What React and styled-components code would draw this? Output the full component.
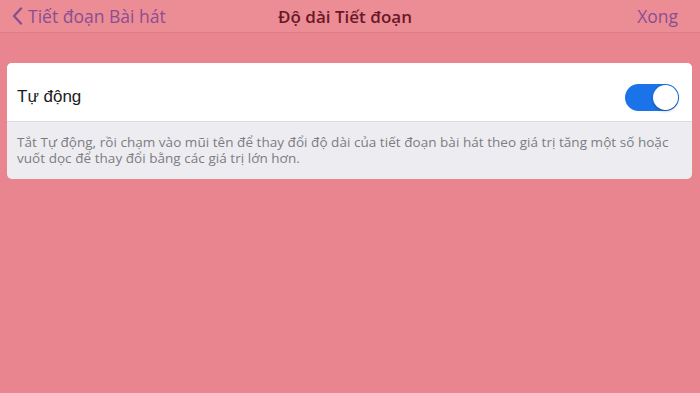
import React from "react";
import styled, { createGlobalStyle } from "styled-components";

const Global = createGlobalStyle`
  html, body { margin: 0; padding: 0; }
  body {
    width: 700px;
    height: 393px;
    overflow: hidden;
    background: #e8858f;
    font-family: "Open Sans", "Liberation Sans", Arial, sans-serif;
  }
`;

const Page = styled.div`
  width: 700px;
  height: 393px;
  display: flex;
  flex-direction: column;
  background: #e8858f;
`;

const NavBar = styled.header`
  height: 32px;
  display: grid;
  grid-template-columns: 1fr auto 1fr;
  align-items: center;
  padding: 0 22px 0 12px;
  background: #ec8d96;
  border-bottom: 1px solid #de7a84;
`;

const Back = styled.div`
  display: flex;
  align-items: center;
  gap: 5px;
  color: #8a4e92;
  font-size: 17.5px;
  justify-self: start;
`;

const Title = styled.div`
  color: #6a1827;
  font-size: 17px;
  font-weight: 600;
`;

const Done = styled.div`
  justify-self: end;
  color: #8a4e92;
  font-size: 17.5px;
  font-weight: 500;
`;

const Content = styled.main`
  padding: 30px 8px 0 7px;
`;

const Card = styled.section`
  border-radius: 5px;
  overflow: hidden;
  background: #ededf1;
`;

const Row = styled.div`
  height: 59px;
  box-sizing: border-box;
  display: flex;
  align-items: center;
  justify-content: space-between;
  padding: 10px 13px 0 10px;
  background: #ffffff;
  border-bottom: 1px solid #dcdce0;
`;

const Label = styled.span`
  font-family: "Liberation Sans", Arial, sans-serif;
  font-size: 17px;
  color: #1c1c1e;
`;

const Toggle = styled.div`
  width: 54px;
  height: 27px;
  border-radius: 14px;
  background: ${p => (p.on ? "#1a73e8" : "#e5e5ea")};
  display: flex;
  align-items: center;
  justify-content: ${p => (p.on ? "flex-end" : "flex-start")};
  padding: 0 1px;
  box-sizing: border-box;
`;

const Knob = styled.div`
  width: 25px;
  height: 25px;
  border-radius: 50%;
  background: #fff;
  box-shadow: 0 1px 3px rgba(0, 0, 0, 0.3);
`;

const Footer = styled.p`
  margin: 0;
  padding: 12px 8px 13px 10px;
  font-size: 13.5px;
  letter-spacing: 0.04px;
  line-height: 16px;
  color: #7c7c82;
`;

export default function App() {
  return (
    <>
      <Global />
      <Page>
        <NavBar>
          <Back>
            <svg width="11" height="18" viewBox="0 0 11 18">
              <path d="M9 1.5 L2 9 L9 16.5" fill="none" stroke="#8a4e92" strokeWidth="2.4" strokeLinecap="round" strokeLinejoin="round" />
            </svg>
            <span>Tiết đoạn Bài hát</span>
          </Back>
          <Title>Độ dài Tiết đoạn</Title>
          <Done>Xong</Done>
        </NavBar>
        <Content>
          <Card>
            <Row>
              <Label>Tự động</Label>
              <Toggle on>
                <Knob />
              </Toggle>
            </Row>
            <Footer>
              Tắt Tự động, rồi chạm vào mũi tên để thay đổi độ dài của tiết đoạn bài hát theo giá trị tăng một số hoặc vuốt dọc để thay đổi bằng các giá trị lớn hơn.
            </Footer>
          </Card>
        </Content>
      </Page>
    </>
  );
}
